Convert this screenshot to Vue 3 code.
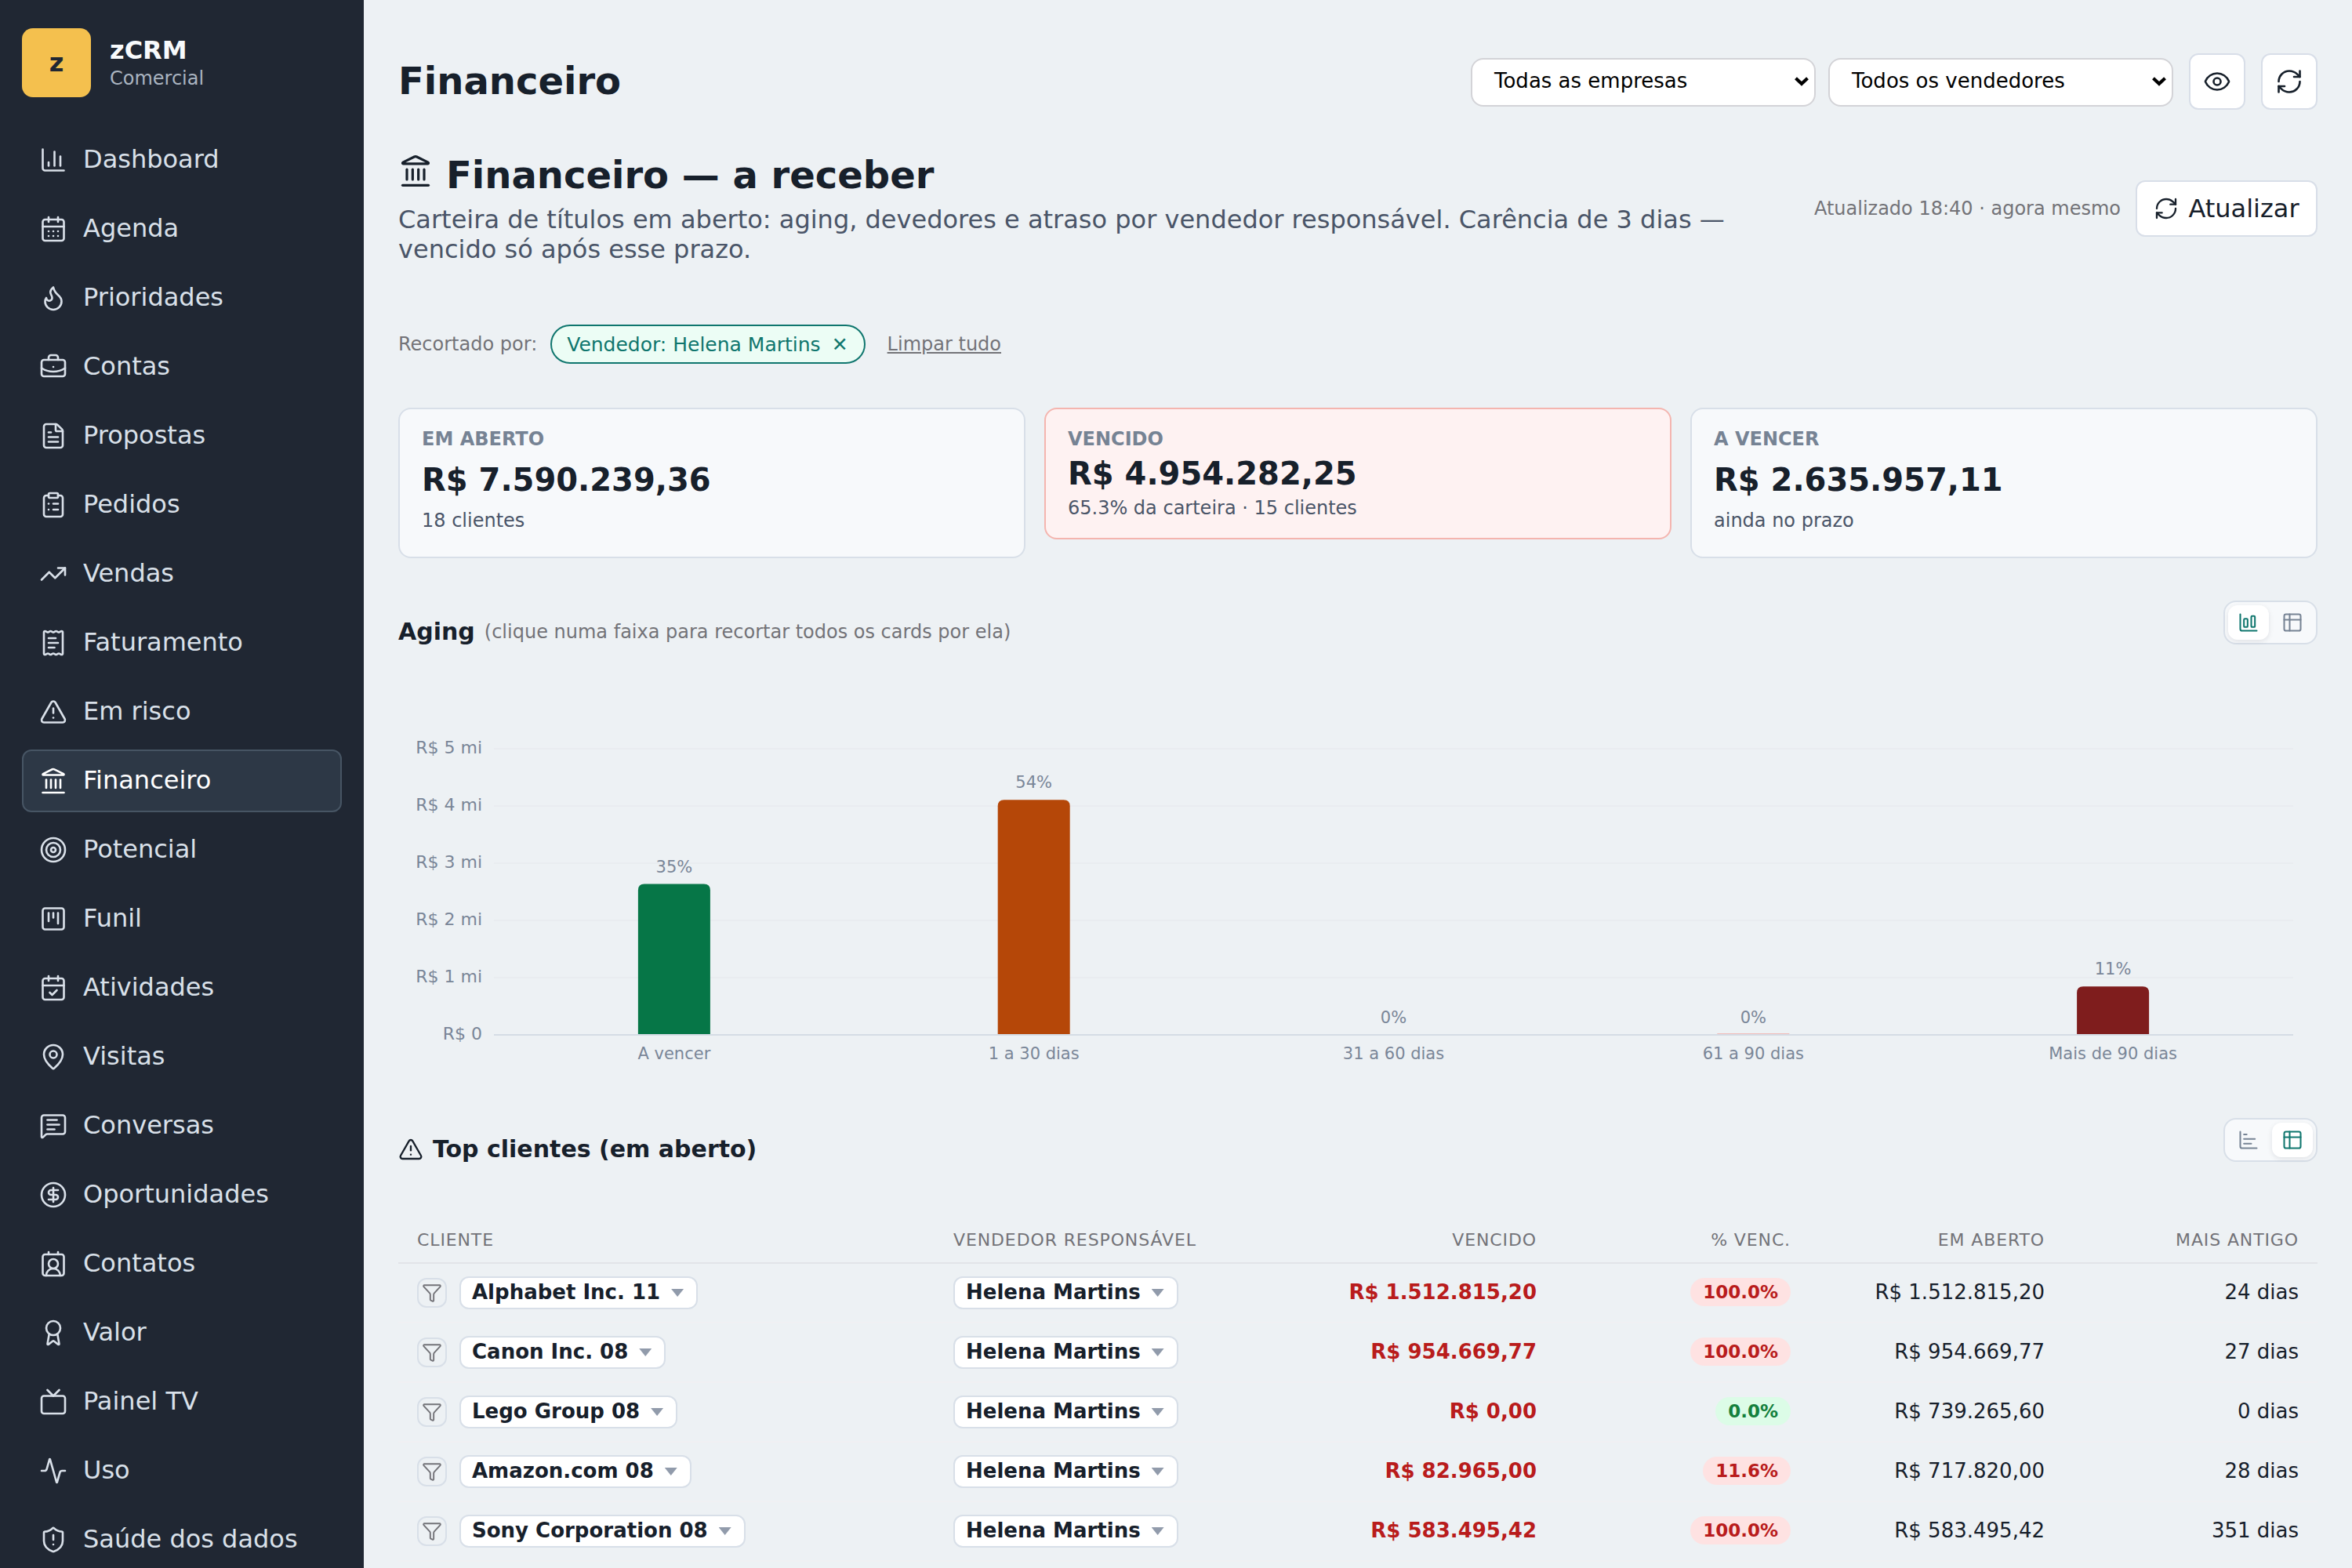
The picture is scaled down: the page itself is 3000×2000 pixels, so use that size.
<!-- src/views/FinanceiroView.vue -->
<template>
  <div class="app-shell">
    <!-- Menu lateral -->
    <aside class="sidebar">
      <div class="brand">
        <div class="brand-logo">z</div>
        <div class="brand-text">
          <div class="brand-name">zCRM</div>
          <div class="brand-sub">Comercial</div>
        </div>
      </div>
      <nav class="menu">
        <a
          v-for="item in menu"
          :key="item.label"
          class="menu-item"
          :class="{ active: item.label === 'Financeiro' }"
        >
          <svg class="icon menu-icon" viewBox="0 0 24 24">
            <path v-for="d in icons[item.icon]" :key="d" :d="d" />
          </svg>
          <span class="menu-label">{{ item.label }}</span>
        </a>
      </nav>
    </aside>

    <main class="content">
      <!-- Barra superior -->
      <header class="topbar">
        <h1 class="page-title">Financeiro</h1>
        <div class="topbar-actions">
          <div v-for="filtro in filtros" :key="filtro" class="select">
            <span>{{ filtro }}</span>
            <svg class="select-arrow" viewBox="0 0 18 12"><path d="M1.5 1.8 9 8.8l7.5-7" /></svg>
          </div>
          <button v-for="name in ['eye', 'refresh']" :key="name" class="icon-btn">
            <svg class="icon" viewBox="0 0 24 24">
              <path v-for="d in icons[name]" :key="d" :d="d" />
            </svg>
          </button>
        </div>
      </header>

      <!-- Cabeçalho da tela -->
      <section class="hero">
        <div class="hero-text">
          <h2 class="hero-title">
            <svg class="icon hero-icon" viewBox="0 0 24 24">
              <path v-for="d in icons.landmark" :key="d" :d="d" />
            </svg>
            <span>Financeiro — a receber</span>
          </h2>
          <p class="hero-desc">
            Carteira de títulos em aberto: aging, devedores e atraso por vendedor responsável. Carência de 3 dias — vencido só após esse prazo.
          </p>
        </div>
        <div class="hero-side">
          <span class="updated">Atualizado 18:40 · agora mesmo</span>
          <button class="refresh-btn">
            <svg class="icon" viewBox="0 0 24 24">
              <path v-for="d in icons.refresh" :key="d" :d="d" />
            </svg>
            <span>Atualizar</span>
          </button>
        </div>
      </section>

      <!-- Recortes ativos -->
      <div class="crop-row">
        <span class="crop-label">Recortado por:</span>
        <button class="crop-chip"><span>Vendedor: Helena Martins</span><span>✕</span></button>
        <a class="crop-clear">Limpar tudo</a>
      </div>

      <!-- Indicadores -->
      <section class="cards">
        <div v-for="card in cards" :key="card.label" class="card" :class="{ danger: card.danger }">
          <div class="card-label">{{ card.label }}</div>
          <div class="card-value">{{ card.value }}</div>
          <div class="card-sub">{{ card.sub }}</div>
        </div>
      </section>

      <!-- Aging -->
      <section class="block">
        <div class="block-head">
          <h3 class="block-title">
            <span>Aging</span>
            <small>(clique numa faixa para recortar todos os cards por ela)</small>
          </h3>
          <div class="toggle">
            <button class="toggle-btn on">
              <svg class="icon" viewBox="0 0 24 24"><path v-for="d in icons.columns" :key="d" :d="d" /></svg>
            </button>
            <button class="toggle-btn">
              <svg class="icon" viewBox="0 0 24 24"><path v-for="d in icons.table" :key="d" :d="d" /></svg>
            </button>
          </div>
        </div>
        <svg class="chart" viewBox="0 0 2448 604">
          <g v-for="t in ticks" :key="t.label">
            <line class="grid" :class="{ axis: t.value === 0 }" x1="122" x2="2417" :y1="t.y" :y2="t.y" />
            <text class="tick" x="107" :y="t.y + 6" text-anchor="end">{{ t.label }}</text>
          </g>
          <g v-for="b in bars" :key="b.label">
            <path v-if="b.height > 8" :d="b.path" :fill="b.color" />
            <rect v-else-if="b.height > 0" :x="b.x - 46" :y="BASE - 2" width="92" height="1" fill="#f0bcb8" />
            <text class="pct" :x="b.x" :y="BASE - b.height - 15" text-anchor="middle">{{ b.pct }}</text>
            <text class="cat" :x="b.x" :y="BASE + 31" text-anchor="middle">{{ b.label }}</text>
          </g>
        </svg>
      </section>

      <!-- Top clientes -->
      <section class="block">
        <div class="block-head">
          <h3 class="block-title">
            <svg class="icon title-icon" viewBox="0 0 24 24">
              <path v-for="d in icons.alert" :key="d" :d="d" />
            </svg>
            <span>Top clientes (em aberto)</span>
          </h3>
          <div class="toggle">
            <button class="toggle-btn">
              <svg class="icon" viewBox="0 0 24 24"><path v-for="d in icons.bars" :key="d" :d="d" /></svg>
            </button>
            <button class="toggle-btn on">
              <svg class="icon" viewBox="0 0 24 24"><path v-for="d in icons.table" :key="d" :d="d" /></svg>
            </button>
          </div>
        </div>

        <div class="table">
          <div class="tr thead">
            <div>Cliente</div>
            <div>Vendedor responsável</div>
            <div class="num">Vencido</div>
            <div class="num">% Venc.</div>
            <div class="num">Em aberto</div>
            <div class="num">Mais antigo</div>
          </div>
          <div v-for="c in clientes" :key="c.nome" class="tr">
            <div class="client-cell">
              <button class="filter-btn">
                <svg class="icon" viewBox="0 0 24 24"><path :d="icons.funnel[0]" /></svg>
              </button>
              <button class="pill"><span>{{ c.nome }}</span><i class="caret"></i></button>
            </div>
            <div><button class="pill"><span>Helena Martins</span><i class="caret"></i></button></div>
            <div class="num overdue">R$ {{ c.vencido }}</div>
            <div class="num"><span class="badge" :class="{ ok: c.pct === '0.0%' }">{{ c.pct }}</span></div>
            <div class="num">R$ {{ c.aberto }}</div>
            <div class="num">{{ c.dias }} dias</div>
          </div>
        </div>
      </section>
    </main>
  </div>
</template>

<script setup>
import { computed, ref } from 'vue';

// Traços dos ícones (grade 24x24)
const icons = {
  chart: ['M3 3v16a2 2 0 0 0 2 2h16', 'M18 17V9', 'M13 17V5', 'M8 17v-3'],
  calendar: ['M8 2v4', 'M16 2v4', 'M5 4h14a2 2 0 0 1 2 2v14a2 2 0 0 1-2 2H5a2 2 0 0 1-2-2V6a2 2 0 0 1 2-2z', 'M3 10h18', 'M8 14h.01', 'M12 14h.01', 'M16 14h.01', 'M8 18h.01', 'M12 18h.01', 'M16 18h.01'],
  flame: ['M12 3q1 4 4 6.5t3 5.5a1 1 0 0 1-14 0 5 5 0 0 1 1-3 1 1 0 0 0 5 0c0-2-1.5-3-1.5-5q0-2 2.5-4'],
  briefcase: ['M12 12h.01', 'M16 6V4a2 2 0 0 0-2-2h-4a2 2 0 0 0-2 2v2', 'M22 13a18.15 18.15 0 0 1-20 0', 'M4 6h16a2 2 0 0 1 2 2v10a2 2 0 0 1-2 2H4a2 2 0 0 1-2-2V8a2 2 0 0 1 2-2z'],
  file: ['M6 22a2 2 0 0 1-2-2V4a2 2 0 0 1 2-2h8a2.4 2.4 0 0 1 1.704.706l3.588 3.588A2.4 2.4 0 0 1 20 8v12a2 2 0 0 1-2 2z', 'M14 2v5a1 1 0 0 0 1 1h5', 'M10 9H8', 'M16 13H8', 'M16 17H8'],
  clipboard: ['M9 2h6a1 1 0 0 1 1 1v2a1 1 0 0 1-1 1H9a1 1 0 0 1-1-1V3a1 1 0 0 1 1-1z', 'M16 4h2a2 2 0 0 1 2 2v14a2 2 0 0 1-2 2H6a2 2 0 0 1-2-2V6a2 2 0 0 1 2-2h2', 'M12 11h4', 'M12 16h4', 'M8 11h.01', 'M8 16h.01'],
  trending: ['M16 7h6v6', 'm22 7-8.5 8.5-5-5L2 17'],
  receipt: ['M13 16H8', 'M14 8H8', 'M16 12H8', 'M4 3a1 1 0 0 1 1-1 1.3 1.3 0 0 1 .7.2l.933.6a1.3 1.3 0 0 0 1.4 0l.934-.6a1.3 1.3 0 0 1 1.4 0l.933.6a1.3 1.3 0 0 0 1.4 0l.933-.6a1.3 1.3 0 0 1 1.4 0l.934.6a1.3 1.3 0 0 0 1.4 0l.933-.6A1.3 1.3 0 0 1 19 2a1 1 0 0 1 1 1v18a1 1 0 0 1-1 1 1.3 1.3 0 0 1-.7-.2l-.933-.6a1.3 1.3 0 0 0-1.4 0l-.934.6a1.3 1.3 0 0 1-1.4 0l-.933-.6a1.3 1.3 0 0 0-1.4 0l-.933.6a1.3 1.3 0 0 1-1.4 0l-.934-.6a1.3 1.3 0 0 0-1.4 0l-.933.6a1.3 1.3 0 0 1-.7.2 1 1 0 0 1-1-1z'],
  alert: ['m21.73 18-8-14a2 2 0 0 0-3.48 0l-8 14A2 2 0 0 0 4 21h16a2 2 0 0 0 1.73-3', 'M12 9v4', 'M12 17h.01'],
  landmark: ['M10 18v-7', 'M11.12 2.198a2 2 0 0 1 1.76.006l7.866 3.847c.476.233.31.949-.22.949H3.474c-.53 0-.695-.716-.22-.949z', 'M14 18v-7', 'M18 18v-7', 'M3 22h18', 'M6 18v-7'],
  target: ['M22 12a10 10 0 1 1-20 0 10 10 0 0 1 20 0z', 'M18 12a6 6 0 1 1-12 0 6 6 0 0 1 12 0z', 'M14 12a2 2 0 1 1-4 0 2 2 0 0 1 4 0z'],
  kanban: ['M5 3h14a2 2 0 0 1 2 2v14a2 2 0 0 1-2 2H5a2 2 0 0 1-2-2V5a2 2 0 0 1 2-2z', 'M8 7v7', 'M12 7v4', 'M16 7v9'],
  check: ['M8 2v4', 'M16 2v4', 'M5 4h14a2 2 0 0 1 2 2v14a2 2 0 0 1-2 2H5a2 2 0 0 1-2-2V6a2 2 0 0 1 2-2z', 'M3 10h18', 'm9 16 2 2 4-4'],
  pin: ['M20 10c0 4.993-5.539 10.193-7.399 11.799a1 1 0 0 1-1.202 0C9.539 20.193 4 14.993 4 10a8 8 0 0 1 16 0', 'M15 10a3 3 0 1 1-6 0 3 3 0 0 1 6 0z'],
  message: ['M22 17a2 2 0 0 1-2 2H6.828a2 2 0 0 0-1.414.586l-2.202 2.202A.71.71 0 0 1 2 21.286V5a2 2 0 0 1 2-2h16a2 2 0 0 1 2 2z', 'M7 11h10', 'M7 15h6', 'M7 7h8'],
  dollar: ['M22 12a10 10 0 1 1-20 0 10 10 0 0 1 20 0z', 'M16 8h-6a2 2 0 1 0 0 4h4a2 2 0 1 1 0 4H8', 'M12 18V6'],
  contact: ['M16 2v2', 'M17.915 22a6 6 0 0 0-12 0', 'M8 2v2', 'M16 12a4 4 0 1 1-8 0 4 4 0 0 1 8 0z', 'M5 4h14a2 2 0 0 1 2 2v14a2 2 0 0 1-2 2H5a2 2 0 0 1-2-2V6a2 2 0 0 1 2-2z'],
  award: ['m15.477 12.89 1.515 8.526a.5.5 0 0 1-.81.47l-3.58-2.687a1 1 0 0 0-1.197 0l-3.586 2.686a.5.5 0 0 1-.81-.469l1.514-8.526', 'M18 8a6 6 0 1 1-12 0 6 6 0 0 1 12 0z'],
  tv: ['m17 2-5 5-5-5', 'M4 7h16a2 2 0 0 1 2 2v11a2 2 0 0 1-2 2H4a2 2 0 0 1-2-2V9a2 2 0 0 1 2-2z'],
  activity: ['M22 12h-2.48a2 2 0 0 0-1.93 1.46l-2.35 8.36a.25.25 0 0 1-.48 0L9.24 2.18a.25.25 0 0 0-.48 0l-2.35 8.36A2 2 0 0 1 4.49 12H2'],
  shield: ['M20 13c0 5-3.5 7.5-7.66 8.95a1 1 0 0 1-.67-.01C7.5 20.5 4 18 4 13V6a1 1 0 0 1 1-1c2 0 4.5-1.2 6.24-2.72a1.17 1.17 0 0 1 1.52 0C14.51 3.81 17 5 19 5a1 1 0 0 1 1 1z', 'M12 8v4', 'M12 16h.01'],
  eye: ['M2.062 12.348a1 1 0 0 1 0-.696 10.75 10.75 0 0 1 19.876 0 1 1 0 0 1 0 .696 10.75 10.75 0 0 1-19.876 0', 'M15 12a3 3 0 1 1-6 0 3 3 0 0 1 6 0z'],
  refresh: ['M3 12a9 9 0 0 1 9-9 9.75 9.75 0 0 1 6.74 2.74L21 8', 'M21 3v5h-5', 'M21 12a9 9 0 0 1-9 9 9.75 9.75 0 0 1-6.74-2.74L3 16', 'M8 16H3v5'],
  columns: ['M3 3v16a2 2 0 0 0 2 2h16', 'M16 5h2a1 1 0 0 1 1 1v10a1 1 0 0 1-1 1h-2a1 1 0 0 1-1-1V6a1 1 0 0 1 1-1z', 'M8 8h2a1 1 0 0 1 1 1v7a1 1 0 0 1-1 1H8a1 1 0 0 1-1-1V9a1 1 0 0 1 1-1z'],
  bars: ['M3 3v16a2 2 0 0 0 2 2h16', 'M7 16h8', 'M7 11h12', 'M7 6h3'],
  table: ['M5 3h14a2 2 0 0 1 2 2v14a2 2 0 0 1-2 2H5a2 2 0 0 1-2-2V5a2 2 0 0 1 2-2z', 'M3 9h18', 'M9 3v18'],
  funnel: ['M10 20a1 1 0 0 0 .553.895l2 1A1 1 0 0 0 14 21v-7a2 2 0 0 1 .517-1.341L21.74 4.67A1 1 0 0 0 21 3H3a1 1 0 0 0-.742 1.67l7.225 7.989A2 2 0 0 1 10 14z']
};

const menu = [
  { label: 'Dashboard', icon: 'chart' },
  { label: 'Agenda', icon: 'calendar' },
  { label: 'Prioridades', icon: 'flame' },
  { label: 'Contas', icon: 'briefcase' },
  { label: 'Propostas', icon: 'file' },
  { label: 'Pedidos', icon: 'clipboard' },
  { label: 'Vendas', icon: 'trending' },
  { label: 'Faturamento', icon: 'receipt' },
  { label: 'Em risco', icon: 'alert' },
  { label: 'Financeiro', icon: 'landmark' },
  { label: 'Potencial', icon: 'target' },
  { label: 'Funil', icon: 'kanban' },
  { label: 'Atividades', icon: 'check' },
  { label: 'Visitas', icon: 'pin' },
  { label: 'Conversas', icon: 'message' },
  { label: 'Oportunidades', icon: 'dollar' },
  { label: 'Contatos', icon: 'contact' },
  { label: 'Valor', icon: 'award' },
  { label: 'Painel TV', icon: 'tv' },
  { label: 'Uso', icon: 'activity' },
  { label: 'Saúde dos dados', icon: 'shield' }
];

const filtros = ['Todas as empresas', 'Todos os vendedores'];

const cards = [
  { label: 'EM ABERTO', value: 'R$ 7.590.239,36', sub: '18 clientes' },
  { label: 'VENCIDO', value: 'R$ 4.954.282,25', sub: '65.3% da carteira · 15 clientes', danger: true },
  { label: 'A VENCER', value: 'R$ 2.635.957,11', sub: 'ainda no prazo' }
];

// Gráfico de aging: valores em milhões
const BASE = 498;
const STEP = 73;
const faixas = ref([
  { label: 'A vencer', value: 2.636, pct: '35%', color: '#067647' },
  { label: '1 a 30 dias', value: 4.105, pct: '54%', color: '#b54708' },
  { label: '31 a 60 dias', value: 0, pct: '0%', color: '#b42318' },
  { label: '61 a 90 dias', value: 0.006, pct: '0%', color: '#b42318' },
  { label: 'Mais de 90 dias', value: 0.845, pct: '11%', color: '#7f1d1d' }
]);

const ticks = [5, 4, 3, 2, 1, 0].map(v => ({
  value: v,
  label: v === 0 ? 'R$ 0' : `R$ ${v} mi`,
  y: BASE - v * STEP
}));

const bars = computed(() => faixas.value.map((f, i) => {
  const x = 122.5 + 458.8 * (i + 0.5);
  const height = f.value * STEP;
  const top = BASE - height;
  // Só os cantos de cima são arredondados
  const path = `M${x - 46} ${BASE - 1}V${top + 8}q0-8 8-8h76q8 0 8 8V${BASE - 1}z`;
  return { ...f, x, height, path };
}));

const clientes = [
  { nome: 'Alphabet Inc. 11', vencido: '1.512.815,20', pct: '100.0%', aberto: '1.512.815,20', dias: 24 },
  { nome: 'Canon Inc. 08', vencido: '954.669,77', pct: '100.0%', aberto: '954.669,77', dias: 27 },
  { nome: 'Lego Group 08', vencido: '0,00', pct: '0.0%', aberto: '739.265,60', dias: 0 },
  { nome: 'Amazon.com 08', vencido: '82.965,00', pct: '11.6%', aberto: '717.820,00', dias: 28 },
  { nome: 'Sony Corporation 08', vencido: '583.495,42', pct: '100.0%', aberto: '583.495,42', dias: 351 }
];
</script>

<style>
body {
  margin: 0;
  background: #edf1f4;
  overflow: hidden;
}
</style>

<style scoped>
.app-shell {
  display: flex;
  height: 2000px;
  overflow: hidden;
  background: #edf1f4;
  color: #17202b;
  font-family: "DejaVu Sans", sans-serif;
  font-size: 26px;
}

button {
  font: inherit;
  color: inherit;
  margin: 0;
  padding: 0;
  box-sizing: border-box;
}

h1,
h2,
h3,
p {
  margin: 0;
}

.icon {
  display: block;
  flex: none;
  width: 36px;
  height: 36px;
  fill: none;
  stroke: currentColor;
  stroke-width: 1.75;
  stroke-linecap: round;
  stroke-linejoin: round;
}

/* Menu lateral */
.sidebar {
  flex: none;
  box-sizing: border-box;
  width: 464px;
  padding: 36px 28px 0;
  background: #202733;
  color: #d9e0e9;
}

.brand {
  display: flex;
  align-items: center;
  gap: 24px;
  height: 88px;
  margin-bottom: 40px;
}

.brand-logo {
  display: flex;
  align-items: center;
  justify-content: center;
  width: 88px;
  height: 88px;
  border-radius: 14px;
  background: #f4c04e;
  color: #202733;
  font-size: 32px;
  font-weight: 700;
}

.brand-name {
  margin-bottom: 2px;
  color: #f8fafc;
  font-size: 32px;
  font-weight: 700;
  line-height: 38px;
}

.brand-sub {
  color: #aab4c0;
  font-size: 24px;
  line-height: 30px;
}

.menu {
  display: flex;
  flex-direction: column;
  gap: 8px;
}

.menu-item {
  display: flex;
  flex: none;
  align-items: center;
  gap: 20px;
  box-sizing: border-box;
  height: 80px;
  padding: 0 20px;
  border: 2px solid transparent;
  border-radius: 12px;
  font-size: 32px;
}

.menu-item.active {
  border-color: #475564;
  background: #2d3846;
  color: #fff;
}

.menu-label {
  padding-bottom: 2px;
}

/* Conteúdo */
.content {
  flex: 1;
  min-width: 0;
  padding: 68px 44px 0;
}

.topbar {
  display: flex;
  align-items: center;
  justify-content: space-between;
  height: 72px;
}

.page-title {
  padding-bottom: 2px;
  font-size: 48px;
  line-height: 56px;
}

.topbar-actions {
  display: flex;
  align-items: center;
}

.select {
  display: flex;
  align-items: center;
  justify-content: space-between;
  box-sizing: border-box;
  width: 440px;
  height: 62px;
  margin: 2px 16px 0 0;
  padding: 0 7px 4px 28px;
  border: 2px solid #d3d3d7;
  border-radius: 16px;
  background: #fff;
  color: #000;
}

.select-arrow {
  width: 18px;
  height: 12px;
  margin-top: 2px;
  fill: none;
  stroke: #000;
  stroke-width: 4.2;
}

.icon-btn {
  display: flex;
  align-items: center;
  justify-content: center;
  width: 72px;
  height: 72px;
  margin-left: 20px;
  border: 2px solid #d8dee8;
  border-radius: 12px;
  background: #fff;
}

.select + .icon-btn {
  margin-left: 4px;
}

.hero {
  display: flex;
  align-items: center;
  justify-content: space-between;
  margin-top: 55px;
}

.hero-text {
  width: 1750px;
}

.hero-title {
  display: flex;
  gap: 17px;
  font-size: 48px;
  line-height: 56px;
}

.hero-icon {
  width: 44px;
  height: 44px;
  margin-top: 1px;
}

.hero-desc {
  margin-top: 10px;
  color: #4a5568;
  font-size: 32px;
  line-height: 38px;
}

.hero-side {
  display: flex;
  align-items: center;
  gap: 19px;
}

.updated {
  color: #737378;
  font-size: 24px;
}

.refresh-btn {
  display: flex;
  align-items: center;
  justify-content: center;
  gap: 12px;
  width: 232px;
  height: 72px;
  border: 2px solid #d8dee8;
  border-radius: 12px;
  background: #fff;
  font-size: 32px;
}

.refresh-btn .icon {
  width: 32px;
  height: 32px;
}

/* Recortes */
.crop-row {
  display: flex;
  align-items: center;
  height: 50px;
  margin-top: 77px;
  color: #737378;
  font-size: 24px;
}

.crop-chip {
  display: flex;
  align-items: center;
  gap: 14px;
  height: 50px;
  margin: 0 28px 0 17px;
  padding: 0 20px 0 19px;
  border: 2px solid #0f766e;
  border-radius: 999px;
  background: #ecfdf5;
  color: #0f766e;
  font-size: 25px;
}

.crop-clear {
  text-decoration: underline;
}

/* Indicadores */
.cards {
  display: grid;
  grid-template-columns: repeat(3, 1fr);
  align-items: start;
  gap: 24px;
  height: 192px;
  margin-top: 56px;
}

.card {
  box-sizing: border-box;
  height: 192px;
  padding: 24px 28px;
  border: 2px solid #d8dfe8;
  border-radius: 16px;
  background: #f7f9fb;
}

.card-label {
  color: #768394;
  font-size: 24px;
  font-weight: 700;
  line-height: 28px;
}

.card-value {
  margin: 14px 0;
  font-size: 40px;
  font-weight: 700;
  line-height: 48px;
}

.card-sub {
  color: #4a5568;
  font-size: 24px;
  line-height: 28px;
}

.card.danger {
  height: 168px;
  border-color: #f4b5af;
  background: #fef2f2;
}

.card.danger .card-value {
  margin: 6px 0;
}

/* Blocos */
.block-head {
  display: flex;
  align-items: flex-start;
  justify-content: space-between;
  height: 56px;
}

.cards + .block {
  margin-top: 54px;
}

.block-title {
  display: flex;
  align-items: center;
  gap: 12px;
  margin-top: 22px;
  font-size: 30px;
  line-height: 35px;
}

.block-title small {
  color: #737378;
  font-size: 24px;
  font-weight: 400;
  line-height: 28px;
}

.title-icon {
  width: 32px;
  height: 32px;
}

.toggle {
  display: flex;
  gap: 4px;
  padding: 4px;
  border: 2px solid #d8dfe8;
  border-radius: 16px;
  background: #f7f9fb;
}

.toggle-btn {
  display: flex;
  align-items: center;
  justify-content: center;
  width: 52px;
  height: 44px;
  border: 0;
  border-radius: 12px;
  background: transparent;
  color: #768394;
}

.toggle-btn.on {
  background: #fff;
  color: #0f766e;
  box-shadow: 0 2px 6px rgba(16, 24, 40, 0.1);
}

.toggle-btn .icon {
  width: 28px;
  height: 28px;
}

.chart {
  display: block;
  width: 2448px;
  height: 604px;
}

.chart text {
  fill: #7a8698;
  font-size: 22px;
}

.chart .cat,
.chart .pct {
  font-size: 21px;
}

.grid {
  stroke: #e9ecf0;
  stroke-width: 2;
}

.grid.axis {
  stroke: #d5dce5;
}

/* Tabela */
.table {
  margin-top: 70px;
}

.tr {
  display: grid;
  grid-template-columns: 684px 468px repeat(4, 324px);
  align-items: center;
  box-sizing: border-box;
  height: 76px;
  border-bottom: 2px solid #f0f0f3;
}

.tr > div {
  padding: 0 24px;
}

.thead {
  height: 60px;
  border-bottom-color: #e2e4e8;
  color: #737378;
  font-size: 22px;
  letter-spacing: 0.04em;
  text-transform: uppercase;
}

.tr > .num {
  padding-bottom: 3px;
  text-align: right;
}

.thead > .num {
  padding-bottom: 0;
}

.overdue {
  color: #b91c1c;
  font-weight: 700;
}

.client-cell {
  display: flex;
  align-items: center;
  gap: 16px;
}

.filter-btn {
  display: flex;
  align-items: center;
  justify-content: center;
  width: 38px;
  height: 38px;
  border: 2px solid #d8dfe8;
  border-radius: 12px;
  background: transparent;
  color: #737378;
}

.filter-btn .icon {
  width: 26px;
  height: 26px;
}

.pill {
  display: flex;
  align-items: center;
  gap: 14px;
  height: 42px;
  padding: 0 16px 3px 14px;
  border: 2px solid #d8dfe8;
  border-radius: 12px;
  background: #fff;
  font-weight: 700;
}

.caret {
  width: 16px;
  height: 10px;
  margin-top: 3px;
  background: #919bab;
  clip-path: polygon(0 0, 100% 0, 50% 100%);
}

.badge {
  display: inline-block;
  height: 36px;
  padding: 0 16px;
  border-radius: 18px;
  background: #fee2e2;
  color: #b91c1c;
  font-size: 23px;
  font-weight: 700;
  line-height: 36px;
}

.badge.ok {
  background: #dcfce7;
  color: #15803d;
}
</style>
